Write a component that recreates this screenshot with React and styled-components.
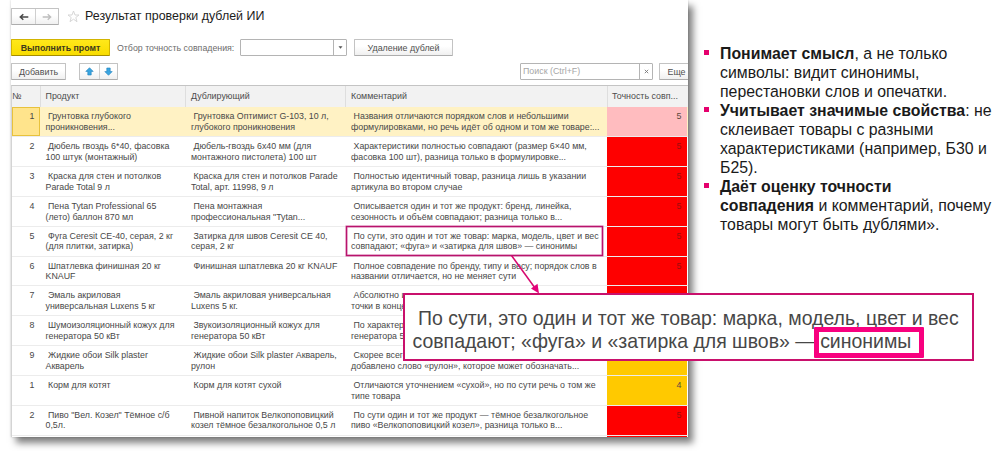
import styled, { createGlobalStyle, css } from "styled-components";

const GlobalStyle = createGlobalStyle`
  * {
    box-sizing: border-box;
  }
  body {
    margin: 0;
    background: #fff;
    font-family: "Liberation Sans", Arial, sans-serif;
    overflow: hidden;
  }
`;

const Slide = styled.main`
  position: relative;
  display: flex;
  align-items: flex-start;
  width: 1000px;
  height: 451px;
  overflow: hidden;
  background: #fff;
`;

const Window = styled.section`
  flex: none;
  width: 677px;
  height: 437px;
  margin-left: 11px;
  background: #fff;
  box-shadow: 5px 6px 7px rgba(0, 0, 0, 0.5), 0 0 2px rgba(0, 0, 0, 0.2);
`;

const WindowBody = styled.div`
  display: flex;
  flex-direction: column;
  height: 100%;
  overflow: hidden;
`;

const TitleBar = styled.header`
  display: flex;
  flex: none;
  align-items: center;
  height: 17px;
  margin-top: 8px;
`;

const Title = styled.h1`
  margin: 0 0 0 5px;
  font-size: 12.45px;
  font-weight: 400;
  line-height: 17px;
  color: #1c1c1c;
  white-space: nowrap;
`;

const Toolbar = styled.div`
  display: flex;
  flex: none;
  align-items: center;
  height: 17px;
  margin-top: ${(props) => props.$top};
`;

const buttonFace = css`
  border: 1px solid #c3c3c3;
  border-bottom-color: #adadad;
  border-radius: 1px;
  background: linear-gradient(#fff 40%, #f0f0f0);
`;

const Button = styled.button`
  ${buttonFace}
  flex: none;
  width: ${(props) => props.$width};
  height: 17px;
  margin: 0 ${(props) => props.$bleed || "0"} 0 ${(props) => props.$gap || "0"};
  padding: 0;
  font-family: inherit;
  font-size: 8.9px;
  line-height: 14px;
  color: #505050;
  white-space: nowrap;
  ${(props) =>
    props.$primary &&
    css`
      border-color: #d2b400;
      border-bottom-color: #a48d00;
      background: linear-gradient(#ffe81a, #f8dc00);
      color: #3f3a1c;
      font-size: 8.8px;
      font-weight: 700;
    `}
`;

const ButtonPair = styled.div`
  ${buttonFace}
  display: grid;
  grid-template-columns: 1fr 1fr;
  width: ${(props) => props.$width};
  height: 17px;
  margin-left: ${(props) => props.$gap || "0"};
`;

const PairItem = styled.span`
  display: flex;
  align-items: center;
  justify-content: center;
  & + & {
    border-left: 1px solid #cfcfcf;
  }
`;

const Label = styled.span`
  width: 123px;
  margin-left: 7px;
  font-size: 8.8px;
  color: #6c6c6c;
  white-space: nowrap;
`;

const Field = styled.div`
  display: flex;
  width: ${(props) => props.$width};
  height: 17px;
  border: 1px solid #b4b4b4;
  border-radius: 1px;
  font-size: 8.85px;
  line-height: 15px;
  color: #a6a6a6;
`;

const FieldText = styled.span`
  flex: 1;
  padding-left: 2px;
  white-space: nowrap;
`;

const FieldButton = styled.span`
  display: flex;
  align-items: center;
  justify-content: center;
  width: 13px;
  border-left: 1px solid #b4b4b4;
`;

const Spacer = styled.div`
  flex: 1;
`;

const Table = styled.div`
  flex: none;
  margin-top: 5px;
  border-top: 1px solid #c4c4c4;
  border-left: 1px solid #d4d4d4;
`;

const columns = css`
  display: grid;
  grid-template-columns: 27.5px 145.5px 160px 262px 79.5px;
`;

const HeadRow = styled.div`
  ${columns}
  height: 21.3px;
  background: #f2f2f2;
  font-size: 8.9px;
  line-height: 20px;
  color: #4c4c4c;
`;

const HeadCell = styled.div`
  padding-left: ${(props) => props.$pad || "5px"};
  white-space: nowrap;
  & + & {
    border-left: 1px solid #dedede;
  }
`;

const Row = styled.div`
  ${columns}
  height: 29.85px;
  font-size: 8.83px;
  line-height: 10.7px;
  color: #484848;
  background: ${(props) => (props.$active ? "#fff2c4" : "#fff")};
  border-bottom: 1px solid #ececec;
`;

const NumberCell = styled.div`
  padding: 4px 5px 0 0;
  text-align: right;
  ${(props) =>
    props.$active &&
    css`
      background: #ffe48c;
      border: 1px solid #e8c23c;
      padding: 3px 4px 0 0;
    `}
`;

const TextCell = styled.div`
  padding: 4px 0 0 6px;
`;

const Line = styled.div`
  height: 10.7px;
  padding-left: ${(props) => (props.$first ? "2.5px" : "0")};
  white-space: pre;
`;

const scoreColors = {
  pale: "#ffbcbf",
  red: "#fe0000",
  amber: "#ffc900",
};

const ScoreCell = styled.div`
  padding: 4px 5px 0 0;
  text-align: right;
  background: ${(props) => scoreColors[props.$tone]};
  color: ${(props) => (props.$tone === "red" ? "#a00c0c" : "#5a4a40")};
`;

const Notes = styled.ul`
  flex: none;
  width: 290px;
  margin: 44px 0 0 16px;
  padding: 0;
  list-style: none;
  font-size: 15.85px;
  line-height: 19.05px;
  color: #1a1a1a;
`;

const Note = styled.li`
  display: flex;
  white-space: nowrap;
  &::before {
    content: "";
    flex: none;
    width: 5px;
    height: 5px;
    margin: 6px 11px 0 0;
    background: #e5006d;
  }
`;

const NoteLine = styled.div`
  height: 19.05px;
`;

const RowMark = styled.div`
  position: absolute;
  left: 346px;
  top: 226px;
  width: 257px;
  height: 30px;
  border: 1px solid #b8146c;
  box-shadow: 0 0 0 0.5px #d0559a, inset 0 0 0 0.5px #d0559a;
`;

const Arrow = styled.svg`
  position: absolute;
  left: 505px;
  top: 254px;
`;

const Callout = styled.div`
  position: absolute;
  left: 403px;
  top: 293px;
  width: 571px;
  height: 68px;
  padding: 12px 0 0 7.5px;
  border: 2px solid #c9106c;
  background: #fff;
  font-size: 19.48px;
  line-height: 23.4px;
  color: #474747;
`;

const CalloutLine = styled.div`
  padding-left: ${(props) => (props.$first ? "5.5px" : "0")};
  white-space: nowrap;
`;

const WordMark = styled.div`
  position: absolute;
  left: 814px;
  top: 327px;
  width: 110px;
  height: 31px;
  border: 5px solid #f8007f;
  border-radius: 1px;
`;

const rows = [
  {
    id: "1",
    product: ["Грунтовка глубокого", "проникновения..."],
    double: ["Грунтовка Оптимист G-103, 10 л,", "глубокого проникновения"],
    comment: ["Названия отличаются порядком слов и небольшими", "формулировками, но речь идёт об одном и том же товаре:..."],
    score: "5",
    tone: "pale",
    active: true,
  },
  {
    id: "2",
    product: ["Дюбель гвоздь 6*40, фасовка", "100 штук (монтажный)"],
    double: ["Дюбель-гвоздь 6х40 мм (для", "монтажного пистолета) 100 шт"],
    comment: ["Характеристики полностью совпадают (размер 6×40 мм,", "фасовка 100 шт), разница только в формулировке..."],
    score: "5",
    tone: "red",
  },
  {
    id: "3",
    product: ["Краска для стен и потолков", "Parade Total 9 л"],
    double: ["Краска для стен и потолков Parade", "Total, арт. 11998, 9 л"],
    comment: ["Полностью идентичный товар, разница лишь в указании", "артикула во втором случае"],
    score: "5",
    tone: "red",
  },
  {
    id: "4",
    product: ["Пена Tytan Professional 65", "(лето) баллон 870 мл"],
    double: ["Пена монтажная", "профессиональная \"Tytan..."],
    comment: ["Описывается один и тот же продукт: бренд, линейка,", "сезонность и объём совпадают; разница только в..."],
    score: "5",
    tone: "red",
  },
  {
    id: "5",
    product: ["Фуга Ceresit CE-40, серая, 2 кг", "(для плитки, затирка)"],
    double: ["Затирка для швов Ceresit CE 40,", "серая, 2 кг"],
    comment: ["По сути, это один и тот же товар: марка, модель, цвет и вес", "совпадают; «фуга» и «затирка для швов» — синонимы"],
    score: "5",
    tone: "red",
  },
  {
    id: "6",
    product: ["Шпатлевка финишная 20 кг", "KNAUF"],
    double: ["Финишная шпатлевка 20 кг KNAUF"],
    comment: ["Полное совпадение по бренду, типу и весу; порядок слов в", "названии отличается, но не меняет сути"],
    score: "5",
    tone: "red",
  },
  {
    id: "7",
    product: ["Эмаль акриловая", "универсальная Luxens 5 кг"],
    double: ["Эмаль акриловая универсальная", "Luxens 5 кг."],
    comment: ["Абсолютно и", "точки в конце"],
    tone: "red",
  },
  {
    id: "8",
    product: ["Шумоизоляционный кожух для", "генератора 50 кВт"],
    double: ["Звукоизоляционный кожух для", "генератора 50 кВт"],
    comment: ["По характер", "генератора 5"],
    tone: "red",
  },
  {
    id: "9",
    product: ["Жидкие обои Silk plaster", "Акварель"],
    double: ["Жидкие обои Silk plaster Акварель,", "рулон"],
    comment: ["Скорее всего", "добавлено слово «рулон», которое может обозначать..."],
    tone: "amber",
  },
  {
    id: "1",
    product: ["Корм для котят"],
    double: ["Корм для котят сухой"],
    comment: ["Отличаются уточнением «сухой», но по сути речь о том же", "типе товара"],
    score: "4",
    tone: "amber",
  },
  {
    id: "2",
    product: ["Пиво \"Вел. Козел\" Тёмное с/б", "0,5л."],
    double: ["Пивной напиток Велкопоповицкий", "козел тёмное безалкогольное 0,5 л"],
    comment: ["По сути один и тот же продукт — тёмное безалкогольное", "пиво «Велкопоповицкий козел», разница только в..."],
    score: "5",
    tone: "red",
  },
  // only the top edge of this row fits in the window
  { product: [], double: [], comment: [], tone: "red" },
];

const ArrowLeft = ({ color }) => (
  <svg width="10" height="8" viewBox="0 0 10 8">
    <path d="M9.3 4H1.5M4.3 1.2L1.3 4l3 2.8" fill="none" stroke={color} strokeWidth="1.5" />
  </svg>
);

const ArrowRight = ({ color }) => (
  <svg width="10" height="8" viewBox="0 0 10 8">
    <path d="M.7 4h7.8M5.7 1.2l3 2.8-3 2.8" fill="none" stroke={color} strokeWidth="1.3" />
  </svg>
);

const Star = styled.svg`
  flex: none;
  margin-left: 8px;
`;

const BlueArrow = ({ down }) => (
  <svg width="9" height="9" viewBox="0 0 9 9">
    <path
      d="M4.5.7L8.2 4.4H6.2V8H2.8V4.4H.8z"
      fill="#39a5e0"
      stroke="#1d7fbd"
      strokeWidth=".6"
      transform={down ? "rotate(180 4.5 4.5)" : undefined}
    />
  </svg>
);

const Cell = ({ lines }) => (
  <TextCell>
    {lines.map((line, i) => (
      <Line key={line} $first={i === 0}>
        {line}
      </Line>
    ))}
  </TextCell>
);

const DuplicatesWindow = () => (
  <Window>
    <WindowBody>
      <TitleBar>
        <ButtonPair $width="48px">
          <PairItem>
            <ArrowLeft color="#484848" />
          </PairItem>
          <PairItem>
            <ArrowRight color="#bdbdbd" />
          </PairItem>
        </ButtonPair>
        <Star width="13" height="13" viewBox="0 0 13 13">
          <path
            d="M6.5 1l1.5 4h4L8.8 7.5l1.2 4.2-3.5-2.5L3 11.7l1.2-4.2L1 5h4z"
            fill="#fff"
            stroke="#d2d2d2"
            strokeWidth=".9"
          />
        </Star>
        <Title>Результат проверки дублей ИИ</Title>
      </TitleBar>
      <Toolbar $top="14px">
        <Button $primary $width="99px">
          Выполнить промт
        </Button>
        <Label>Отбор точность совпадения:</Label>
        <Field $width="107px">
          <FieldText />
          <FieldButton>
            <svg width="5" height="3" viewBox="0 0 5 3">
              <path d="M.5.3h4L2.5 2.7z" fill="#555" />
            </svg>
          </FieldButton>
        </Field>
        <Button $width="99px" $gap="7px">
          Удаление дублей
        </Button>
      </Toolbar>
      <Toolbar $top="7px">
        <Button $width="55px">Добавить</Button>
        <ButtonPair $width="39px" $gap="13px">
          <PairItem>
            <BlueArrow />
          </PairItem>
          <PairItem>
            <BlueArrow down />
          </PairItem>
        </ButtonPair>
        <Spacer />
        <Field $width="133px">
          <FieldText>Поиск (Ctrl+F)</FieldText>
          <FieldButton>
            <svg width="5" height="5" viewBox="0 0 5 5">
              <path d="M.8.8l3.4 3.4M4.2.8L.8 4.2" stroke="#777" strokeWidth=".9" />
            </svg>
          </FieldButton>
        </Field>
        <Button $width="35px" $gap="6px" $bleed="-6px">
          Еще
        </Button>
      </Toolbar>
      <Table>
        <HeadRow>
          <HeadCell $pad="0">№</HeadCell>
          <HeadCell>Продукт</HeadCell>
          <HeadCell>Дублирующий</HeadCell>
          <HeadCell>Комментарий</HeadCell>
          <HeadCell $pad="4px">Точность совп...</HeadCell>
        </HeadRow>
        {rows.map((row, i) => (
          <Row key={i} $active={row.active}>
            <NumberCell $active={row.active}>{row.id}</NumberCell>
            <Cell lines={row.product} />
            <Cell lines={row.double} />
            <Cell lines={row.comment} />
            <ScoreCell $tone={row.tone}>{row.score}</ScoreCell>
          </Row>
        ))}
      </Table>
    </WindowBody>
  </Window>
);

const App = () => (
  <>
    <GlobalStyle />
    <Slide>
      <DuplicatesWindow />
      <Notes>
        <Note>
          <div>
            <NoteLine>
              <b>Понимает смысл</b>, а не только
            </NoteLine>
            <NoteLine>символы: видит синонимы,</NoteLine>
            <NoteLine>перестановки слов и опечатки.</NoteLine>
          </div>
        </Note>
        <Note>
          <div>
            <NoteLine>
              <b>Учитывает значимые свойства</b>: не
            </NoteLine>
            <NoteLine>склеивает товары с разными</NoteLine>
            <NoteLine>характеристиками (например, Б30 и</NoteLine>
            <NoteLine>Б25).</NoteLine>
          </div>
        </Note>
        <Note>
          <div>
            <NoteLine>
              <b>Даёт оценку точности</b>
            </NoteLine>
            <NoteLine>
              <b>совпадения</b> и комментарий, почему
            </NoteLine>
            <NoteLine>товары могут быть дублями».</NoteLine>
          </div>
        </Note>
      </Notes>
      <RowMark />
      <Arrow width="40" height="40" viewBox="0 0 40 40">
        <path d="M6.5 1.5L30 34" stroke="#d6086f" strokeWidth="1.5" />
        <path d="M34 39.5L26 34.5L32.5 29.8z" fill="#e5007a" />
      </Arrow>
      <Callout>
        <CalloutLine $first>По сути, это один и тот же товар: марка, модель, цвет и вес</CalloutLine>
        <CalloutLine>совпадают; «фуга» и «затирка для швов» — синонимы</CalloutLine>
      </Callout>
      <WordMark />
    </Slide>
  </>
);

export default App;
